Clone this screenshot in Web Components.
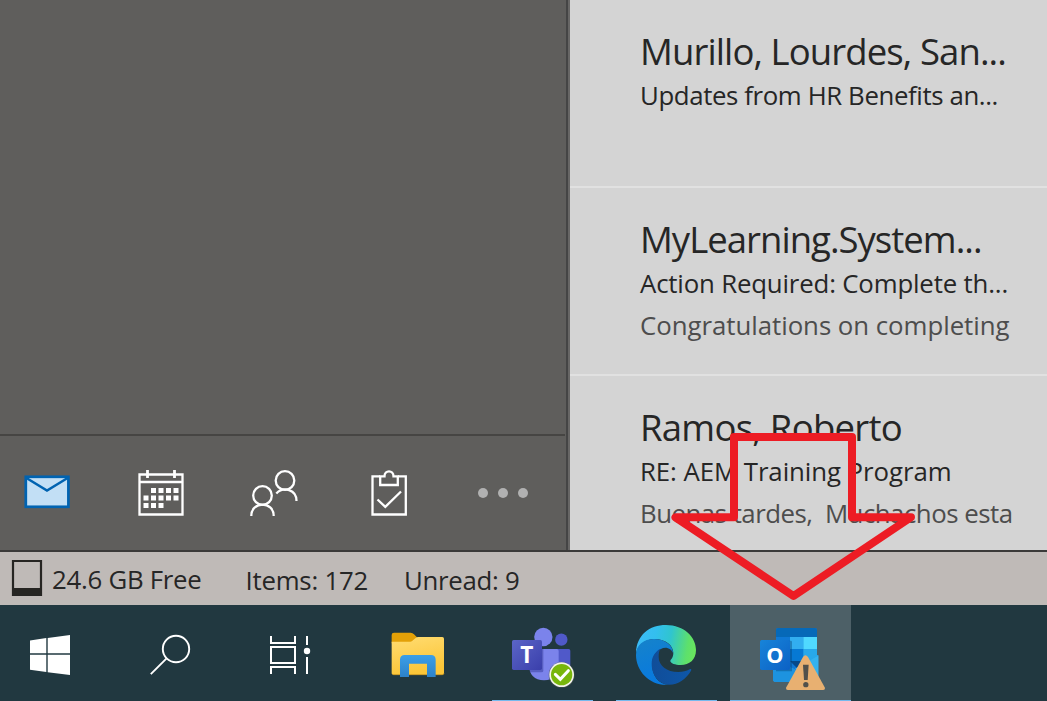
<!DOCTYPE html>
<html lang="en">
<head>
<meta charset="utf-8">
<title>Mail</title>
<style>
html,body{margin:0;height:100%;overflow:hidden}
body{font-family:"Open Sans","Noto Sans",sans-serif;color:#262626}
</style>
</head>
<body>
<mail-desktop></mail-desktop>
<script>
const define=(name,html,init)=>{
  const t=document.createElement('template');t.innerHTML=html;
  customElements.define(name,class extends HTMLElement{
    constructor(){super();this.attachShadow({mode:'open'}).append(t.content.cloneNode(true));}
    connectedCallback(){if(init)init.call(this,this.shadowRoot);}
  });
};

/* One line of text, tracked so that its advance equals the "width" attribute. */
define('fit-text',`<style>:host{display:block;white-space:pre}span{display:inline-block}</style><span><slot></slot></span>`,function(r){
  const s=r.querySelector('span'),w=+this.getAttribute('width');
  const n=this.textContent.length;
  s.style.letterSpacing='0px';
  s.style.letterSpacing=((w-s.getBoundingClientRect().width)/n).toFixed(3)+'px';
});

define('mail-item',`<style>
:host{display:block;box-sizing:border-box;height:188px;padding:27px 0 0 70px;border-bottom:2px solid #e1e1e1;white-space:nowrap;overflow:hidden}
.from{font-size:36.5px;line-height:48px;height:47px}
.subject,.preview{font-size:25.8px;line-height:42px;height:42px}
.preview{color:#4d4d4d}
</style><div class="from"><slot name="from"></slot></div><div class="subject"><slot name="subject"></slot></div><div class="preview"><slot name="preview"></slot></div>`);

define('nav-bar',`<style>
:host{display:flex;box-sizing:border-box;width:565px;height:116px;border-top:2px solid #464543}
svg{display:block;flex:none;height:114px}
</style>
<svg width="100" viewBox="0 436 100 114"><rect x="25.8" y="476.8" width="42.6" height="30" fill="#c2dff5" stroke="#0063b1" stroke-width="2.7"/><path d="M26 477.8 47 490.6 68 477.8" fill="none" stroke="#0063b1" stroke-width="2.5"/></svg>
<svg width="120" viewBox="100 436 120 114"><g fill="none" stroke="#fff" stroke-width="2.3"><path d="M139.5 474.5h43v40h-43zM139.5 482h43"/><path d="M147.5 470v8M174.5 470v8" stroke-width="2.8"/></g><path fill="#fff" d="M151 488h5v5h-5zM158.5 488h5v5h-5zM166 488h5v5h-5zM173.500 488h5v5h-5zM143.500 495.500h5v5h-5zM151 495.500h5v5h-5zM158.500 495.500h5v5h-5zM166 495.500h5v5h-5zM173.500 495.500h5v5h-5zM143.500 503h5v5h-5zM151 503h5v5h-5zM158.500 503h5v5h-5z"/></svg>
<svg width="110" viewBox="220 436 110 114"><g fill="none" stroke="#fff" stroke-width="2.3"><circle cx="262.500" cy="495.500" r="9.300"/><circle cx="285" cy="480.500" r="9.300"/><path d="M251.300 516C251.300 500.800 273.700 500.800 273.700 516M276.300 493.500C283.500 486 296.500 489.500 296.500 501"/></g></svg>
<svg width="120" viewBox="330 436 120 114"><g fill="none" stroke="#fff" stroke-width="2.3"><path d="M380 476.300H372.500V514.500H405.800V476.300H398"/><path d="M380.200 476.300H384.500C384.500 469.800 393.500 469.800 393.500 476.300H397.800V485H380.200Z"/><path d="M377.500 499.500 385.300 506.800 401 491.500"/></g></svg>
<svg width="115" viewBox="450 436 115 114" fill="#b1b1b1"><circle cx="483" cy="493" r="5"/><circle cx="503" cy="493" r="5"/><circle cx="523" cy="493" r="5"/></svg>`);

define('status-bar',`<style>
:host{display:flex;box-sizing:border-box;height:55px;border-top:2px solid #3b3a39;background:#bfbab7;font-size:25.800px;line-height:53px}
svg{display:block;flex:none;width:52px;height:53px}
.disk{width:193.500px}.items{width:158.500px}
.disk,.items,.unread{padding-top:1px}.items,.unread{padding-top:2px}
</style><svg viewBox="0 552 52 53"><path d="M13 561h28v34H13z" fill="none" stroke="#262522" stroke-width="2.200"/><path d="M12 588h30v7.800H12z" fill="#262522"/></svg>
<div class="disk"><fit-text width="149.500">24.6 GB Free</fit-text></div>
<div class="items"><fit-text width="122.500">Items: 172</fit-text></div>
<div class="unread"><fit-text width="115.500">Unread: 9</fit-text></div>`);

define('task-tile',`<style>
:host{display:flex;flex:none;justify-content:center;align-items:flex-end;position:relative;height:96px;background:var(--tile,transparent)}
::slotted(svg){position:absolute;inset:0;width:100%;height:100%}
i{display:block;width:var(--bar,0);height:1px;background:#76b9ed}
</style><slot></slot><i></i>`);

define('task-bar',`<style>
:host{display:flex;height:96px;background:#213840}
text{font-family:"Open Sans",sans-serif;font-weight:700;fill:#fff;text-anchor:middle}
</style>
<task-tile style="width:100px"><svg viewBox="0 605 100 96"><path fill="#fff" d="M30 640.400 46.300 638.100V653.200H30ZM47.700 637.900 70 635V653.200H47.700ZM30 654.700H46.300V672L30 669.700ZM47.700 654.700H70V675L47.700 672.200Z"/></svg></task-tile>
<task-tile style="width:130px"><svg viewBox="100 605 130 96"><circle cx="176" cy="649" r="13.200" fill="none" stroke="#fff" stroke-width="1.900"/><path d="M166.600 658.400 150.800 674.200" stroke="#fff" stroke-width="1.900"/></svg></task-tile>
<task-tile style="width:126px"><svg viewBox="230 605 126 96"><path fill="none" stroke="#fff" stroke-width="2" d="M271 636V643H295V636M271 647H295V663H271ZM271 674V667H295V674M307 636V645M307 657V674"/><circle cx="307" cy="651" r="3.200" fill="#fff"/></svg></task-tile>
<task-tile style="width:125px"><svg viewBox="356 605 125 96"><defs><linearGradient id="f" x1="0" y1="0" x2=".3" y2="1"><stop stop-color="#ffdc72"/><stop offset="1" stop-color="#fcc638"/></linearGradient><linearGradient id="fb" x2="0" y2="1"><stop stop-color="#3b9fe8"/><stop offset="1" stop-color="#2d82c9"/></linearGradient></defs><g transform="translate(370 600) scale(.33333)"><path d="M65 105q0-7 7-7h50q6 0 10 5l9 9-15 18H65z" fill="#e3a007"/><path d="M65 125h56q5 0 8-4l7-6q3-4 9-4h72q5 0 5 5v103q0 5-5 5H70q-5 0-5-5z" fill="url(#f)"/><path d="M66 221q2 3 5 3h146q4 0 5-4" fill="none" stroke="#d99e1b" stroke-width="2"/><path d="M90 231v-52q0-14 14-14h79q14 0 14 14v52h-26v-40h-54v40z" fill="url(#fb)"/></g></svg></task-tile>
<task-tile style="width:123px;--bar:101px"><svg viewBox="481 605 123 96"><defs><linearGradient id="t" x2="1" y2="1"><stop stop-color="#5b65c7"/><stop offset="1" stop-color="#3a3fab"/></linearGradient></defs><g transform="translate(370 600) scale(.33333)"><circle cx="574" cy="119" r="18.500" fill="#5059c9"/><circle cx="520" cy="111" r="27.500" fill="#7b83eb"/><path d="M560 147h36q5 0 5 5v43q0 28-28 30h-20z" fill="#5059c9"/><path d="M478 147h82q6 0 6 6v44q0 42-44 44-44-2-44-44z" fill="#7b83eb"/><path d="M478 147h42v65q0 5-6 5h-34q-2-8-2-20z" fill="#4a50b0" opacity=".7"/><rect x="426" y="120" width="90" height="90" rx="5" fill="url(#t)"/><text x="470.500" y="189" font-size="68">T</text><circle cx="575" cy="225" r="39" fill="#4a554f" opacity=".6"/><circle cx="575" cy="224" r="37" fill="#f3f3ea"/><circle cx="575" cy="224" r="32" fill="#78b60b"/><path d="m556 223 15 15 24-26" fill="none" stroke="#fff" stroke-width="9" stroke-linecap="round"/></g></svg></task-tile>
<task-tile style="width:125px;--bar:101px"><svg viewBox="604 605 125 96"><defs><linearGradient id="e1" x1="110" y1="120" x2="288" y2="150" gradientUnits="userSpaceOnUse"><stop stop-color="#3cbcf8"/><stop offset=".3" stop-color="#33bfee"/><stop offset=".55" stop-color="#30c5ce"/><stop offset=".85" stop-color="#5de06c"/><stop offset="1" stop-color="#6ae65c"/></linearGradient><linearGradient id="e2" x1="0" y1="0" x2=".3" y2="1"><stop stop-color="#1683ca"/><stop offset="1" stop-color="#0879df"/></linearGradient><linearGradient id="e3" x2="1"><stop stop-color="#104d99"/><stop offset="1" stop-color="#0e57a8"/></linearGradient></defs><g transform="translate(600 600) scale(.33333)"><path d="M108 158C110 105 148 75 198 75c55 0 90 37 90 75 0 29-20 45-46 45-16 0-31-5-31-12 0-5 9-8 9-24 0-22-22-42-57-42-28 0-49 20-55 41z" fill="url(#e1)"/><path d="M108 165c0-30 23-48 54-48 34 0 57 19 57 42-3-9-12-16-23-16-17 0-40 20-40 49 0 33 18 62 52 62-56 6-100-39-100-89z" fill="url(#e2)"/><path d="M181 146c-18 10-26 27-26 46 0 35 24 62 53 62 27 0 51-18 65-42 2-4 0-6-4-4-10 6-20 8-34 8-35 0-59-19-59-45 0-11 1-18 5-25z" fill="url(#e3)"/></g></svg></task-tile>
<task-tile style="width:121px;margin-left:1px;--tile:#4d6067;--bar:121px"><svg viewBox="730 605 121 96"><defs><linearGradient id="o" x2="1" y2="1"><stop stop-color="#1784d9"/><stop offset="1" stop-color="#0c61c5"/></linearGradient></defs><g transform="translate(600 600) scale(.33333)"><path d="M519 165h136v73q0 8-8 8H527q-8 0-8-8z" fill="#28a0e8"/><path d="M528 90q0-6 6-6h111q6 0 6 6v94l-62 26-61-26z" fill="#0f78d4"/><path d="M528 90q0-6 6-6h111q6 0 6 6v21H528z" fill="#0669b8"/><path d="M570 111h40v36h-40z" fill="#32aeef"/><path d="M610 111h41v36h-41z" fill="#50d9ff"/><path d="M570 147h40v36h-40z" fill="#0679d4"/><path d="M610 147h41v36h-41z" fill="#28a8ea"/><path d="M570 183h40v20h-20z" fill="#064a8a"/><path d="M655 167v71l-70-32z" fill="#35b2ef"/><path d="m519 176 136 66q-3 4-9 4H527q-8 0-8-8z" fill="#1d93df"/><path d="M528 122h44q4 0 4 4v88h-48z" fill="#073f70" opacity=".4"/><rect x="480" y="120" width="90" height="90" rx="5" fill="url(#o)"/><text x="524.500" y="188" font-size="65">O</text><path d="M609 171q7-10 15 0l50 91q3 8-5 8H564q-8 0-5-8z" fill="#e8b071"/><path d="M609 194h17l-3 46h-11z" fill="#51504b"/><circle cx="617.500" cy="254" r="8" fill="#51504b"/></g></svg></task-tile>`);

define('callout-arrow',`<style>:host{position:absolute;left:669px;top:430px;width:250px;height:175px;pointer-events:none}svg{display:block}</style>
<svg width="250" height="175" viewBox="669 430 250 175"><path d="M734 437H852V517.300H911L793.500 596 675.500 517.300H734Z" fill="none" stroke="#ed1c24" stroke-width="8" stroke-linejoin="round"/></svg>`);

define('mail-desktop',`<style>
:host{display:flex;flex-direction:column;width:1047px;height:701px;position:relative;overflow:hidden}
main{display:flex;height:550px;overflow:hidden}
aside{display:flex;flex-direction:column;justify-content:flex-end;box-sizing:border-box;width:570px;background:linear-gradient(90deg,#5f5e5c 566px,#454545 566px 568px,#676665 568px)}
section{flex:1;min-width:0;background:#d4d4d4}
</style>
<main><aside><nav-bar></nav-bar></aside><section>
<mail-item><fit-text slot="from" width="366">Murillo, Lourdes, San...</fit-text><fit-text slot="subject" width="358">Updates from HR Benefits an...</fit-text></mail-item>
<mail-item><fit-text slot="from" width="341.500">MyLearning.System...</fit-text><fit-text slot="subject" width="368">Action Required: Complete th...</fit-text><fit-text slot="preview" width="369.500">Congratulations on completing</fit-text></mail-item>
<mail-item><fit-text slot="from" width="262">Ramos, Roberto</fit-text><fit-text slot="subject" width="311.500">RE: AEM Training Program</fit-text><fit-text slot="preview" width="372.500">Buenas tardes,  Muchachos esta</fit-text></mail-item>
</section></main>
<status-bar></status-bar><task-bar></task-bar><callout-arrow></callout-arrow>`);
</script>
</body>
</html>
